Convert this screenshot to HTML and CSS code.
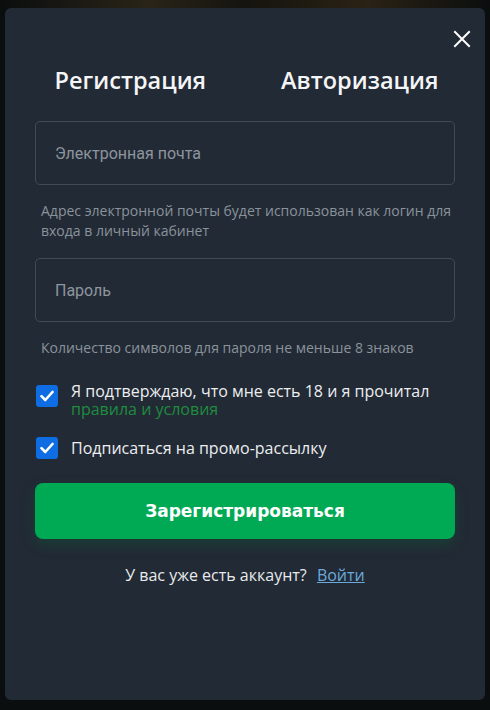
FILE: index.html
```html
<!DOCTYPE html>
<html lang="ru">
<head>
<meta charset="utf-8">
<link rel="stylesheet" href="styles.css">
</head>
<body>
<div class="backdrop">
  <div class="modal">
    <button class="close" aria-label="Закрыть">
      <svg width="18" height="18" viewBox="0 0 18 18"><path d="M2 2L16 16M16 2L2 16" stroke="#fff" stroke-width="2" stroke-linecap="square"/></svg>
    </button>
    <div class="tabs">
      <div class="tab">Регистрация</div>
      <div class="tab">Авторизация</div>
    </div>
    <form class="form">
      <input class="field" type="email" placeholder="Электронная почта">
      <p class="hint">Адрес электронной почты будет использован как логин для входа в личный кабинет</p>
      <input class="field" type="password" placeholder="Пароль">
      <p class="hint">Количество символов для пароля не меньше 8 знаков</p>
      <label class="check check-top">
        <span class="box"><svg width="14" height="12" viewBox="0 0 14 12"><path d="M1.5 6.2L5.3 10L12.5 2" fill="none" stroke="#fff" stroke-width="2.6" stroke-linecap="round" stroke-linejoin="round"/></svg></span>
        <span class="label">Я подтверждаю, что мне есть 18 и я прочитал <a class="rules">правила и условия</a></span>
      </label>
      <label class="check check-mid">
        <span class="box"><svg width="14" height="12" viewBox="0 0 14 12"><path d="M1.5 6.2L5.3 10L12.5 2" fill="none" stroke="#fff" stroke-width="2.6" stroke-linecap="round" stroke-linejoin="round"/></svg></span>
        <span class="label">Подписаться на промо-рассылку</span>
      </label>
      <button class="submit" type="button">Зарегистрироваться</button>
      <p class="footer">У вас уже есть аккаунт? <a class="login">Войти</a></p>
    </form>
  </div>
</div>
</body>
</html>
```
FILE: styles.css
```css
* { box-sizing: border-box; }
html, body { margin: 0; padding: 0; }
body {
  width: 490px;
  height: 710px;
  overflow: hidden;
  background: #0b0e0e;
  font-family: "Open Sans", "Noto Sans", sans-serif;
}
.backdrop {
  padding: 8px 5px 10px;
  background: linear-gradient(90deg, #0b0e0e 0, #2a2418 30%, #15140f 50%, #2a2214 75%, #0b0e0e 100%);
  background-size: 100% 8px;
  background-repeat: no-repeat;
}
.modal {
  position: relative;
  height: 692px;
  background: #222a35;
  border-radius: 6px;
  padding: 56px 30px 0;
}
.close {
  position: absolute;
  top: 22px;
  right: 14px;
  width: 18px;
  height: 18px;
  padding: 0;
  border: 0;
  background: none;
  display: flex;
}
.tabs {
  display: flex;
  justify-content: center;
  gap: 75px;
  height: 32px;
  align-items: center;
  padding-left: 3px;
}
.tab {
  color: #f4f5f6;
  font-size: 23.5px;
  font-weight: 600;
  line-height: 30px;
}
.form {
  display: flex;
  flex-direction: column;
  margin-top: 25px;
}
.field {
  display: block;
  width: 420px;
  height: 64px;
  background: transparent;
  border: 1px solid #414a55;
  border-radius: 5px;
  padding: 0 19px;
  font-family: Roboto, "Noto Sans", sans-serif;
  font-size: 16px;
  color: #e0e3e6;
  outline: none;
}
.field::placeholder { color: #8d959e; }
.hint {
  margin: 16px 0 17px 6px;
  font-size: 14px;
  line-height: 20px;
  color: #8a939c;
}
.check {
  display: flex;
  gap: 13px;
  margin-left: 1px;
}
.check-top {
  align-items: flex-start;
  margin-top: 9px;
}
.check-top .label { margin: -2px 0 2px; }
.check-mid {
  align-items: center;
  margin-top: 17px;
}
.box {
  flex: none;
  width: 22px;
  height: 22px;
  border-radius: 3px;
  background: #0f6de3;
  display: flex;
  align-items: center;
  justify-content: center;
}
.check-top .box { margin-top: 1px; }
.label {
  font-size: 16px;
  line-height: 18px;
  color: #eceef0;
}
.rules {
  color: #1f8c3e;
}
.submit {
  margin-top: 24px;
  height: 56px;
  width: 420px;
  border: 0;
  border-radius: 8px;
  background: #00aa55;
  color: #fff;
  font-family: "DejaVu Sans", Verdana, sans-serif;
  font-weight: bold;
  font-size: 17px;
  box-shadow: 0 6px 14px rgba(0, 120, 60, 0.25);
}
.footer {
  margin: 25px 0 0;
  text-align: center;
  font-size: 16px;
  line-height: 22px;
  color: #e8eaec;
}
.login {
  margin-left: 6px;
  color: #6aa9dc;
  text-decoration: underline;
}
```
